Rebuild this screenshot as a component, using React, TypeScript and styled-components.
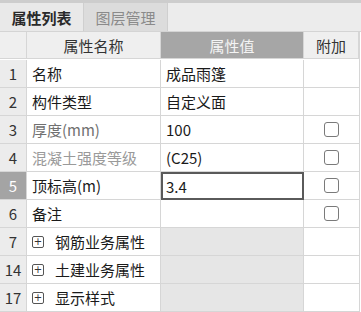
import React from 'react';
import styled, { createGlobalStyle } from 'styled-components';

const GlobalStyle = createGlobalStyle`
  html, body {
    margin: 0;
    padding: 0;
    background: #ffffff;
  }
  body {
    font-family: "Noto Sans CJK SC", "Noto Sans", sans-serif;
    color: #222;
  }
`;

const Panel = styled.div`
  width: 361px;
  height: 312px;
  overflow: hidden;
  background: #fff;
`;

const TopStrip = styled.div`
  height: 3px;
  background: #cdcdcd;
`;

const TabBar = styled.div`
  display: flex;
  height: 28px;
  background: #ececec;
  border-bottom: 1px solid #d4d4d4;
`;

const Tab = styled.div<{ $active?: boolean }>`
  width: 83px;
  display: flex;
  align-items: center;
  justify-content: center;
  font-size: 15px;
  font-weight: ${({ $active }) => ($active ? 700 : 400)};
  color: ${({ $active }) => ($active ? '#2a2a2a' : '#8a8a8a')};
  background: ${({ $active }) => ($active ? '#e9e9e9' : '#dcdcdc')};
  border-right: 1px solid #cfcfcf;
`;

const Grid = styled.div`
  display: grid;
  grid-template-columns: 27px 134px 143px 55px;
  grid-auto-rows: 28px;
  width: 359px;
  border-right: 1px solid #d6d6d6;
`;

const HeadCell = styled.div<{ $dark?: boolean }>`
  height: 27px;
  box-sizing: border-box;
  display: flex;
  align-items: center;
  justify-content: center;
  font-size: 15px;
  color: ${({ $dark }) => ($dark ? '#f4f4f4' : '#333')};
  background: ${({ $dark }) => ($dark ? '#a6a6a6' : '#efefef')};
  border-right: 1px solid #d6d6d6;
  border-bottom: 1px solid #d6d6d6;
`;

const NumCell = styled.div<{ $current?: boolean }>`
  box-sizing: border-box;
  display: flex;
  align-items: center;
  justify-content: center;
  font-size: 15px;
  color: ${({ $current }) => ($current ? '#ffffff' : '#333')};
  background: ${({ $current }) => ($current ? '#a4a4a4' : '#ececec')};
  border-right: 1px solid #d6d6d6;
  border-bottom: 1px solid #d6d6d6;
`;

const Cell = styled.div<{ $muted?: 'light' | 'mid'; $shade?: boolean; $editing?: boolean }>`
  box-sizing: border-box;
  display: flex;
  align-items: center;
  padding-left: 5px;
  font-size: 15px;
  white-space: nowrap;
  color: ${({ $muted }) =>
    $muted === 'light' ? '#9a9a9a' : $muted === 'mid' ? '#707070' : '#1a1a1a'};
  background: ${({ $shade }) => ($shade ? '#e6e6e6' : '#ffffff')};
  border-right: 1px solid #d6d6d6;
  border-bottom: 1px solid #d6d6d6;
  ${({ $editing }) =>
    $editing &&
    `
    border: 2px solid #5a5a5a;
    padding-left: 3px;
  `}
`;

const AddCell = styled.div`
  box-sizing: border-box;
  display: flex;
  align-items: center;
  justify-content: center;
  border-bottom: 1px solid #d6d6d6;
`;

const CheckBox = styled.span`
  width: 13px;
  height: 13px;
  border: 1px solid #7a7a7a;
  border-radius: 3px;
  background: #fff;
`;

const Expander = styled.span`
  width: 10px;
  height: 10px;
  border: 1px solid #555;
  border-radius: 2px;
  margin-right: 11px;
  display: inline-flex;
  align-items: center;
  justify-content: center;
  font-size: 10px;
  line-height: 1;
  color: #333;
  font-family: "DejaVu Sans", sans-serif;
`;

type Row = {
  no: string;
  name: string;
  value?: string;
  muted?: 'light' | 'mid';
  check?: boolean;
  group?: boolean;
  current?: boolean;
};

const rows: Row[] = [
  { no: '1', name: '名称', value: '成品雨篷' },
  { no: '2', name: '构件类型', value: '自定义面' },
  { no: '3', name: '厚度(mm)', value: '100', muted: 'mid', check: true },
  { no: '4', name: '混凝土强度等级', value: '(C25)', muted: 'light', check: true },
  { no: '5', name: '顶标高(m)', value: '3.4', check: true, current: true },
  { no: '6', name: '备注', value: '', check: true },
  { no: '7', name: '钢筋业务属性', group: true },
  { no: '14', name: '土建业务属性', group: true },
  { no: '17', name: '显示样式', group: true },
];

export default function App() {
  return (
    <Panel>
      <GlobalStyle />
      <TopStrip />
      <TabBar>
        <Tab $active>属性列表</Tab>
        <Tab>图层管理</Tab>
      </TabBar>
      <Grid>
        <HeadCell />
        <HeadCell>属性名称</HeadCell>
        <HeadCell $dark>属性值</HeadCell>
        <HeadCell>附加</HeadCell>
        {rows.map((r) => (
          <React.Fragment key={r.no}>
            <NumCell $current={r.current}>{r.no}</NumCell>
            <Cell $muted={r.muted}>
              {r.group && <Expander>+</Expander>}
              {r.name}
            </Cell>
            <Cell $shade={r.group} $editing={r.current}>
              {r.value}
            </Cell>
            <AddCell>{r.check && <CheckBox />}</AddCell>
          </React.Fragment>
        ))}
      </Grid>
    </Panel>
  );
}
